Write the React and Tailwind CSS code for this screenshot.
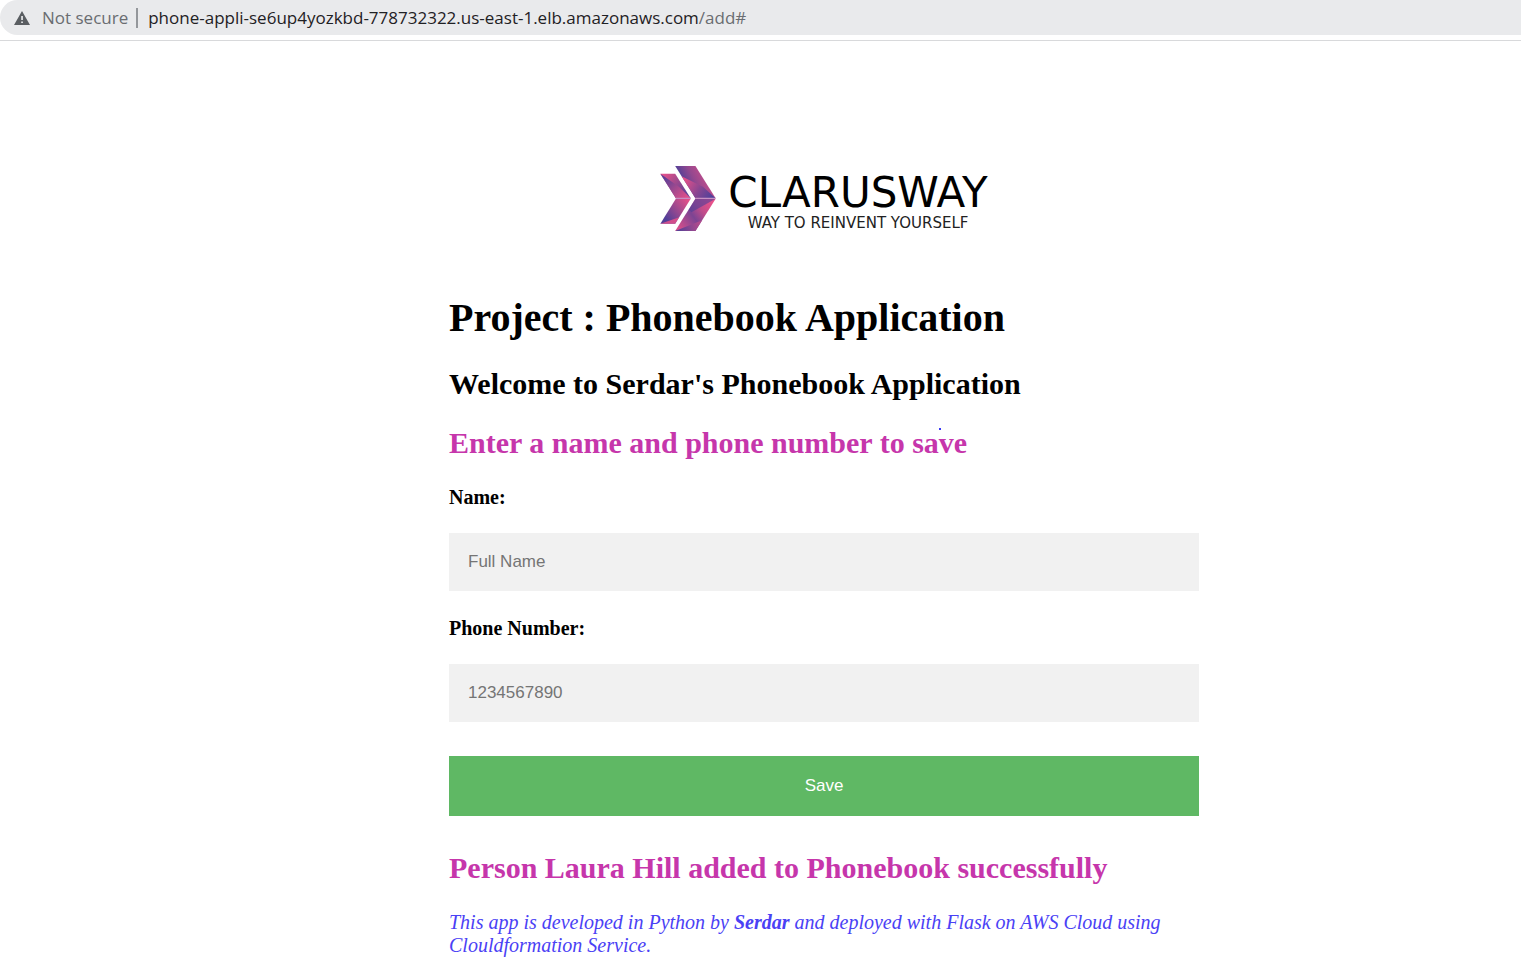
const inputClass =
  "mt-6 block h-[58px] w-full bg-[#f1f1f1] px-[19px] font-['Liberation_Sans',sans-serif] text-[17px] placeholder:text-[#757575]";
const labelClass = 'mt-[25px] block text-[20px] leading-6 font-bold';

function LogoMark() {
  return (
    <svg className="h-[65px] w-14" viewBox="33 33 166 195" preserveAspectRatio="none" aria-hidden="true">
      <defs>
        <linearGradient id="bigTop" gradientUnits="userSpaceOnUse" x1="84" y1="55" x2="150" y2="22">
          <stop offset="0" stopColor="#4d3f98" />
          <stop offset=".5" stopColor="#94488f" />
          <stop offset="1" stopColor="#c24d8b" />
        </linearGradient>
        <linearGradient id="bigTopShade" gradientUnits="userSpaceOnUse" x1="105" y1="75" x2="192" y2="130">
          <stop offset="0" stopColor="#e2508a" />
          <stop offset=".5" stopColor="#8a4691" />
          <stop offset="1" stopColor="#483f9b" />
        </linearGradient>
        <linearGradient id="bigLow" gradientUnits="userSpaceOnUse" x1="84" y1="215" x2="185" y2="140">
          <stop offset="0" stopColor="#d64f8b" />
          <stop offset=".45" stopColor="#7c4493" />
          <stop offset=".7" stopColor="#c04c8b" />
          <stop offset="1" stopColor="#e8518a" />
        </linearGradient>
        <linearGradient id="bigLowShade" gradientUnits="userSpaceOnUse" x1="80" y1="228" x2="150" y2="205">
          <stop offset="0" stopColor="#4d3f98" />
          <stop offset="1" stopColor="#b34b8c" />
        </linearGradient>
        <linearGradient id="smallTop" gradientUnits="userSpaceOnUse" x1="42" y1="56" x2="124" y2="126">
          <stop offset="0" stopColor="#e8518a" />
          <stop offset=".4" stopColor="#a34a8d" />
          <stop offset="1" stopColor="#4a3f9a" />
        </linearGradient>
        <linearGradient id="smallTopShade" gradientUnits="userSpaceOnUse" x1="45" y1="70" x2="110" y2="130">
          <stop offset="0" stopColor="#5a4097" />
          <stop offset=".5" stopColor="#a0498e" />
          <stop offset="1" stopColor="#e0508a" />
        </linearGradient>
        <linearGradient id="smallLow" gradientUnits="userSpaceOnUse" x1="50" y1="190" x2="120" y2="134">
          <stop offset="0" stopColor="#523f98" />
          <stop offset=".5" stopColor="#a0498e" />
          <stop offset="1" stopColor="#e8518a" />
        </linearGradient>
      </defs>
      <path fill="url(#bigTop)" d="M78 33h60l60 97h-60Z" />
      <path fill="url(#bigTopShade)" d="M97 64 160 95 198 130h-60Z" />
      <path fill="url(#bigLow)" d="M78 228h60l60-97h-60Z" />
      <path fill="#4c3f9a" fillOpacity=".6" d="M138 131H198L126 172 118 164Z" />
      <path fill="url(#bigLowShade)" d="M78 228H138L158 196Z" />
      <path fill="url(#smallTop)" d="M34 56h44l46 74H80Z" />
      <path fill="url(#smallTopShade)" d="M34 56 90 96 124 130H80Z" />
      <path fill="url(#smallLow)" d="M34 206h44l46-75H80Z" />
      <path fill="#e5518a" fillOpacity=".85" d="M34 206H78L90 187Z" />
      <path fill="#c78fc3" d="M80 128h44v4H80ZM138 128h59v4h-59Z" />
    </svg>
  );
}

export default function App() {
  return (
    <div className="min-h-screen bg-white font-['Liberation_Serif',serif] text-black">
      <header className="border-b border-[#d8d9db] pb-[5px]">
        <div className="flex h-[35px] items-center rounded-l-full bg-[#e9eaec] pl-3.5 font-['Open_Sans','Noto_Sans',sans-serif] text-[17px] text-[#6a6d71]">
          <svg className="h-3.5 w-4" viewBox="0 0 16 14" aria-hidden="true">
            <path fill="#5a5e62" fillRule="evenodd" d="M8 0 16 14H0ZM7.2 5v4h1.7V5Zm0 5.4v1.7h1.7v-1.7Z" />
          </svg>
          <span className="ml-3">Not secure</span>
          <span className="mr-2.5 ml-2 h-5 w-0.5 bg-[#94979b]" />
          <a href="#" className="text-[#6a6d71]">
            <span className="text-[#1f2124]">phone-appli-se6up4yozkbd-778732322.us-east-1.elb.amazonaws.com</span>/add#
          </a>
        </div>
      </header>

      <main className="pl-[127px]">
        <div className="mx-auto max-w-[750px] pt-[125px]">
          <div className="flex items-start justify-center gap-3">
            <LogoMark />
            <div className="flex flex-col items-center pt-1.5 font-['DejaVu_Sans',sans-serif]">
              <span className="text-[42px] leading-[42px]">CLARUSWAY</span>
              <span className="text-[15px] leading-[18px] text-[#222]">WAY TO REINVENT YOURSELF</span>
            </div>
          </div>

          <h1 className="mt-[63px] text-[40px] leading-[46px] font-bold">Project : Phonebook Application</h1>
          <h2 className="mt-[26px] text-[30px] leading-[34px] font-bold">Welcome to Serdar's Phonebook Application</h2>
          <h2 className="relative mt-[25px] w-fit text-[30px] leading-[34px] font-bold text-[#c636ab]">
            Enter a name and phone number to save
            <span className="absolute top-0.5 right-[26px] size-0.5 bg-[#3a3af5]" />
          </h2>

          <form onSubmit={(e) => e.preventDefault()}>
            <label htmlFor="name" className={labelClass}>Name:</label>
            <input id="name" type="text" placeholder="Full Name" className={inputClass} />
            <label htmlFor="phone" className={labelClass}>Phone Number:</label>
            <input id="phone" type="text" placeholder="1234567890" className={inputClass} />
            <button type="submit" className="mt-[34px] block h-[60px] w-full bg-[#5fb864] font-['Liberation_Sans',sans-serif] text-[17px] text-white">Save</button>
          </form>

          <h2 className="mt-[35px] text-[30px] leading-[34px] font-bold text-[#c636ab]">Person Laura Hill added to Phonebook successfully</h2>
          <p className="mt-[26px] text-[20px] leading-[23px] text-[#4a41f5] italic">
            This app is developed in Python by <b>Serdar</b> and deployed with Flask on AWS Cloud using Clouldformation Service.
          </p>
        </div>
      </main>
    </div>
  );
}
